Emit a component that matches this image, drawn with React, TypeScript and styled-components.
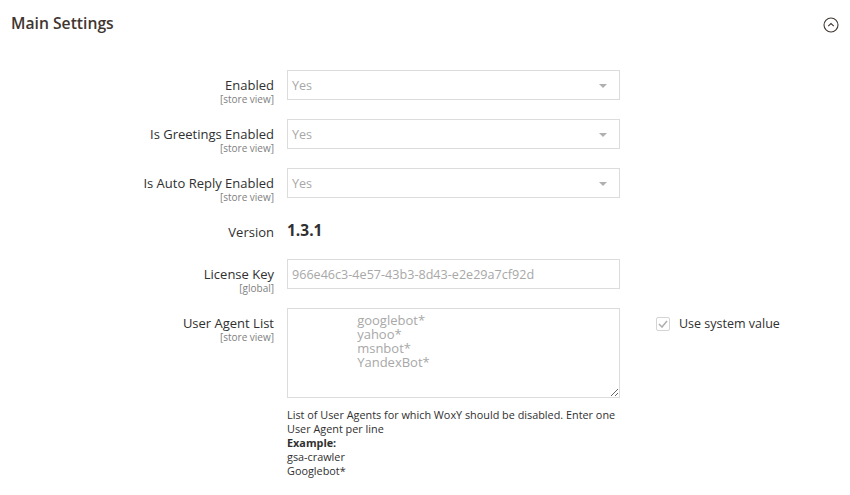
import React from "react";
import styled, { createGlobalStyle } from "styled-components";

const Global = createGlobalStyle`
  html, body { margin: 0; padding: 0; background: #ffffff; }
  body { font-family: "Open Sans", "Liberation Sans", sans-serif; color: #303030; }
  * { box-sizing: border-box; }
`;

const Page = styled.div`
  width: 850px;
  height: 495px;
  overflow: hidden;
  background: #ffffff;
`;

const Header = styled.div`
  display: flex;
  justify-content: space-between;
  align-items: flex-start;
  padding: 13px 11px 0 11px;
  height: 40px;
`;

const Title = styled.h2`
  margin: 0;
  font-size: 15.7px;
  line-height: 20px;
  font-weight: 600;
  color: #41362f;
`;

const Toggle = styled.span`
  display: flex;
  margin-top: 4px;
`;

const Form = styled.div`
  display: flex;
  flex-direction: column;
  gap: 14px;
  padding-top: 30px;
`;

const Row = styled.div<{ $extra?: number }>`
  display: grid;
  grid-template-columns: 274px 333px 1fr;
  column-gap: 13px;
  align-items: start;
  padding-bottom: ${(p) => p.$extra ?? 0}px;
`;

const LabelCol = styled.div`
  text-align: right;
  padding-top: 7px;
`;

const LabelText = styled.div`
  font-size: 13px;
  line-height: 16px;
  font-weight: 400;
  color: #303030;
`;

const Scope = styled.div`
  font-size: 10px;
  line-height: 12px;
  color: #808080;
`;

const Control = styled.div`
  display: flex;
  flex-direction: column;
`;

const SelectBox = styled.div`
  position: relative;
  height: 30px;
  border: 1px solid #dcdcdc;
  background: #fff;
  display: flex;
  align-items: center;
  padding-left: 4px;
  font-size: 12.6px;
  color: #a8a8a8;
`;

const Arrow = styled.span`
  position: absolute;
  right: 12px;
  top: 13px;
  width: 0;
  height: 0;
  border-left: 4px solid transparent;
  border-right: 4px solid transparent;
  border-top: 4px solid #b0b0b0;
`;

const VersionValue = styled.div`
  font-size: 15.5px;
  line-height: 20px;
  font-weight: 700;
  color: #303030;
  padding-top: 3px;
`;

const TextInput = styled.div`
  height: 30px;
  border: 1px solid #dcdcdc;
  display: flex;
  align-items: center;
  padding-left: 4px;
  font-size: 12.6px;
  color: #a8a8a8;
`;

const TextArea = styled.textarea`
  display: block;
  width: 333px;
  height: 90px;
  margin: 0;
  border: 1px solid #dcdcdc;
  padding: 4px 5px;
  font-family: "Open Sans", "Liberation Sans", sans-serif;
  font-size: 13px;
  line-height: 14px;
  color: #a8a8a8;
  background: #fff;
  resize: vertical;
  white-space: pre;
  overflow: hidden;
  &:disabled { color: #a8a8a8; background: #fff; opacity: 1; }
`;

const Note = styled.div`
  margin-top: 10px;
  font-size: 10.85px;
  line-height: 14px;
  color: #303030;
  white-space: nowrap;
  strong { font-weight: 700; }
`;

const SystemValue = styled.label`
  display: flex;
  align-items: center;
  gap: 9px;
  margin-left: 23px;
  margin-top: 7px;
  font-size: 12.5px;
  color: #303030;
`;

const CheckBox = styled.span`
  width: 14px;
  height: 14px;
  border: 1px solid #d4d4d4;
  border-radius: 2px;
  display: flex;
  align-items: center;
  justify-content: center;
  background: #fff;
`;

const Field: React.FC<{ label: string; scope?: string; children: React.ReactNode; side?: React.ReactNode; extra?: number }> = ({ label, scope, children, side, extra }) => (
  <Row $extra={extra}>
    <LabelCol>
      <LabelText>{label}</LabelText>
      {scope && <Scope>{scope}</Scope>}
    </LabelCol>
    <Control>{children}</Control>
    <div>{side}</div>
  </Row>
);

const Select: React.FC<{ value: string }> = ({ value }) => (
  <SelectBox>
    {value}
    <Arrow />
  </SelectBox>
);

const pad = "                   ";
const agents = ["googlebot*", "yahoo*", "msnbot*", "YandexBot*"].map((a) => pad + a).join("\n");

export default function App() {
  return (
    <Page>
      <Global />
      <Header>
        <Title>Main Settings</Title>
        <Toggle>
          <svg width="16" height="16" viewBox="0 0 16 16">
            <circle cx="8" cy="8" r="7" fill="none" stroke="#41362f" strokeWidth="1.1" />
            <path d="M5.2 9.2 L8 6.5 L10.8 9.2" fill="none" stroke="#41362f" strokeWidth="1.1" />
          </svg>
        </Toggle>
      </Header>
      <Form>
        <Field label="Enabled" scope="[store view]">
          <Select value="Yes" />
        </Field>
        <Field label="Is Greetings Enabled" scope="[store view]">
          <Select value="Yes" />
        </Field>
        <Field label="Is Auto Reply Enabled" scope="[store view]">
          <Select value="Yes" />
        </Field>
        <Field label="Version" extra={5}>
          <VersionValue>1.3.1</VersionValue>
        </Field>
        <Field label="License Key" scope="[global]">
          <TextInput>966e46c3-4e57-43b3-8d43-e2e29a7cf92d</TextInput>
        </Field>
        <Field
          label="User Agent List"
          scope="[store view]"
          side={
            <SystemValue>
              <CheckBox>
                <svg width="10" height="8" viewBox="0 0 10 8">
                  <path d="M1 4 L4 7 L9 1" fill="none" stroke="#b0b0b0" strokeWidth="1.6" />
                </svg>
              </CheckBox>
              Use system value
            </SystemValue>
          }
        >
          <TextArea disabled value={agents} readOnly />
          <Note>
            List of User Agents for which WoxY should be disabled. Enter one
            <br />
            User Agent per line
            <br />
            <strong>Example:</strong>
            <br />
            gsa-crawler
            <br />
            Googlebot*
          </Note>
        </Field>
      </Form>
    </Page>
  );
}
